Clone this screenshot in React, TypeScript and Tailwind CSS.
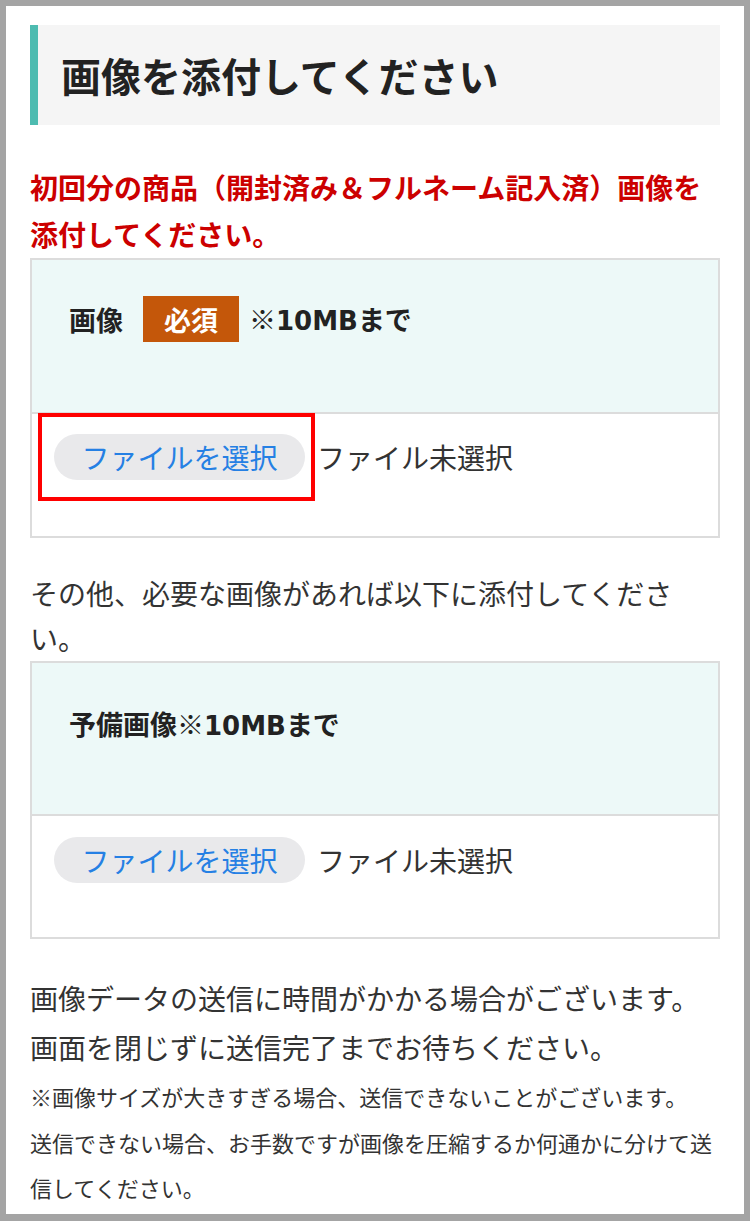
import React from "react";

function FileRow({ highlight }: { highlight?: boolean }) {
  return (
    <div className="flex items-center h-[46px]">
      <div className="relative">
        <div className="w-[251px] h-[46px] rounded-full bg-[#e9e9eb] flex items-center justify-center text-[28px] text-[#2580e4] leading-none">
          ファイルを選択
        </div>
        {highlight && (
          <div className="pointer-events-none absolute left-[-16px] top-[-21px] w-[277px] h-[88px] border-4 border-[#ff0000]" />
        )}
      </div>
      <span className="ml-[12px] text-[28px] text-[#333333] leading-none">ファイル未選択</span>
    </div>
  );
}

function Latin({ children }: { children: React.ReactNode }) {
  return <span className="font-['DejaVu_Sans',sans-serif] text-[26px]">{children}</span>;
}

export default function App() {
  return (
    <div className="min-h-screen bg-[#a4a4a4] pt-[6px] pl-[6px] pr-[6px] pb-[7px] font-['Noto_Sans_CJK_JP','Noto_Sans',sans-serif]">
      <div className="bg-white px-[24px] pt-[19px] pb-[3px]">
        <div className="h-[100px] border-l-[8px] border-[#4dbbb0] bg-[#f5f5f5] flex items-center pl-[23px]">
          <h1 className="text-[40px] font-bold text-[#222222] leading-none">画像を添付してください</h1>
        </div>

        <p className="mt-[39px] text-[28px] leading-[47px] font-bold text-[#cc0000]">
          初回分の商品（開封済み＆フルネーム記入済）画像を添付してください。
        </p>

        <div className="border-2 border-[#dcdcdc]">
          <div className="h-[152px] bg-[#edf9f8] pt-[36px] pl-[37px]">
            <div className="flex items-center h-[46px] text-[27px] font-bold text-[#222222] leading-none">
              <span>画像</span>
              <span className="ml-[20px] w-[96px] h-[46px] bg-[#c4570a] text-white flex items-center justify-center">必須</span>
              <span className="ml-[10px]">
                ※<Latin>10MB</Latin>まで
              </span>
            </div>
          </div>
          <div className="border-t-2 border-[#dcdcdc] h-[124px] pt-[20px] pl-[22px]">
            <FileRow highlight />
          </div>
        </div>

        <p className="mt-[33px] text-[28px] leading-[45px] text-[#333333]">
          その他、必要な画像があれば以下に添付してください。
        </p>

        <div className="border-2 border-[#dcdcdc]">
          <div className="h-[151px] bg-[#edf9f8] pt-[38px] pl-[37px]">
            <div className="flex items-center h-[46px] text-[27px] font-bold text-[#222222] leading-none">
              <span>
                予備画像※<Latin>10MB</Latin>まで
              </span>
            </div>
          </div>
          <div className="border-t-2 border-[#dcdcdc] h-[123px] pt-[21px] pl-[22px]">
            <FileRow />
          </div>
        </div>

        <p className="mt-[35px] text-[28px] leading-[49px] text-[#333333]">
          画像データの送信に時間がかかる場合がございます。
          <br />
          画面を閉じずに送信完了までお待ちください。
        </p>
        <p className="mt-[2px] text-[22px] leading-[45.5px] text-[#333333]">
          ※画像サイズが大きすぎる場合、送信できないことがございます。
          <br />
          送信できない場合、お手数ですが画像を圧縮するか何通かに分けて送信してください。
        </p>
      </div>
    </div>
  );
}
